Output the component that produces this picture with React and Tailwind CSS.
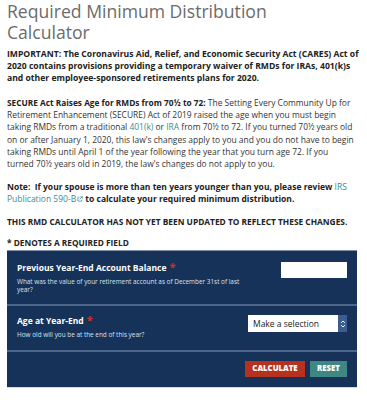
import React from "react";

const Star = () => <span className="text-[#d0312d] text-[11px] align-top leading-none ml-[3px]">*</span>;

const App = () => {
  return (
    <div className="w-[367px] h-[400px] bg-white px-[7px] overflow-hidden" style={{ fontFamily: '"Open Sans", sans-serif' }}>
      <h1 className="text-[17.6px] leading-[21px] text-[#6b6b6b] pt-[1px]">
        Required Minimum Distribution
        <br />
        Calculator
      </h1>

      <div className="text-[8.45px] leading-[12.2px] text-[#333333]">
        <p className="mt-[5px] text-[8.6px] leading-[12px] font-bold text-[#222222]">
          IMPORTANT: The Coronavirus Aid, Relief, and Economic Security Act (CARES) Act of
          <br />
          2020 contains provisions providing a temporary waiver of RMDs for IRAs, 401(k)s
          <br />
          and other employee-sponsored retirements plans for 2020.
        </p>

        <p className="mt-[13px]">
          <span className="text-[8.3px] font-bold text-[#222222]">SECURE Act Raises Age for RMDs from 70½ to 72:</span> The Setting Every Community Up for
          <br />
          Retirement Enhancement (SECURE) Act of 2019 raised the age when you must begin
          <br />
          taking RMDs from a traditional <a className="text-[#3a8c93]">401(k)</a> or <a className="text-[#3a8c93]">IRA</a> from 70½ to 72. If you turned 70½ years old
          <br />
          on or after January 1, 2020, this law's changes apply to you and you do not have to begin
          <br />
          taking RMDs until April 1 of the year following the year that you turn age 72. If you
          <br />
          turned 70½ years old in 2019, the law's changes do not apply to you.
        </p>

        <p className="mt-[11px] text-[8.5px] font-bold text-[#222222]">
          Note:&nbsp; If your spouse is more than ten years younger than you, please review <a className="font-normal text-[#3a8c93]">IRS</a>
          <br />
          <a className="font-normal text-[#3a8c93]">
            Publication 590-B
            <svg viewBox="0 0 10 10" className="inline w-[6px] h-[6px] ml-[1px] align-baseline" fill="none" stroke="#3a8c93" strokeWidth="1.2">
              <path d="M4 2H1.5v6.5H8V6" />
              <path d="M5.5 1.2H8.8V4.5M8.8 1.2 4.5 5.5" />
            </svg>
          </a>{" "}
          to calculate your required minimum distribution.
        </p>

        <p className="mt-[10px] text-[8.35px] font-bold text-[#222222]">
          THIS RMD CALCULATOR HAS NOT YET BEEN UPDATED TO REFLECT THESE CHANGES.
        </p>

        <p className="mt-[9px] text-[8.3px] font-bold text-[#222222]">* DENOTES A REQUIRED FIELD</p>
      </div>

      <div className="mt-[1px] w-[350px] bg-[#163259] border-t border-[#7f8fa8] shadow-[0_1px_0_#d5d9e0]">
        {/* balance */}
        <div className="flex justify-between px-[10px] pt-[10px] pb-[10px] border-b-2 border-[#4c6789]">
          <div className="w-[230px]">
            <div className="text-[8.5px] leading-[14px] font-bold text-white">
              Previous Year-End Account Balance
              <Star />
            </div>
            <div className="mt-[3px] text-[6.4px] leading-[8px] text-[#dbe2ec]">
              What was the value of your retirement account as of December 31st of last year?
            </div>
          </div>
          <input className="mt-[1px] w-[66px] h-[16px] bg-white border-0 outline-none" />
        </div>

        {/* age */}
        <div className="flex justify-between px-[10px] pt-[8px] pb-[11px] border-b-2 border-[#4c6789]">
          <div className="w-[230px]">
            <div className="text-[8.5px] leading-[14px] font-bold text-white">
              Age at Year-End
              <Star />
            </div>
            <div className="mt-[3px] text-[6.4px] leading-[8px] text-[#dbe2ec]">
              How old will you be at the end of this year?
            </div>
          </div>
          <div className="mt-[1px] flex w-[99px] h-[17px] bg-white items-stretch">
            <div className="flex-1 text-[8.5px] leading-[17px] text-[#222222] pl-[5px]">Make a selection</div>
            <div className="w-[9px] bg-[#3c5d8f] flex flex-col items-center justify-center">
              <svg viewBox="0 0 8 12" className="w-[6px] h-[10px]" fill="none" stroke="white" strokeWidth="1.3">
                <path d="M1.5 4.5 4 2l2.5 2.5M1.5 7.5 4 10l2.5-2.5" />
              </svg>
            </div>
          </div>
        </div>

        {/* buttons */}
        <div className="flex justify-end gap-[5px] px-[10px] pt-[9px] pb-[10px]">
          <button className="w-[60px] h-[16px] bg-[#b7321e] text-white text-[7.8px] font-extrabold">CALCULATE</button>
          <button className="w-[37px] h-[16px] bg-[#3e8782] text-white text-[7.8px] font-extrabold">RESET</button>
        </div>
      </div>
    </div>
  );
};

export default App;
